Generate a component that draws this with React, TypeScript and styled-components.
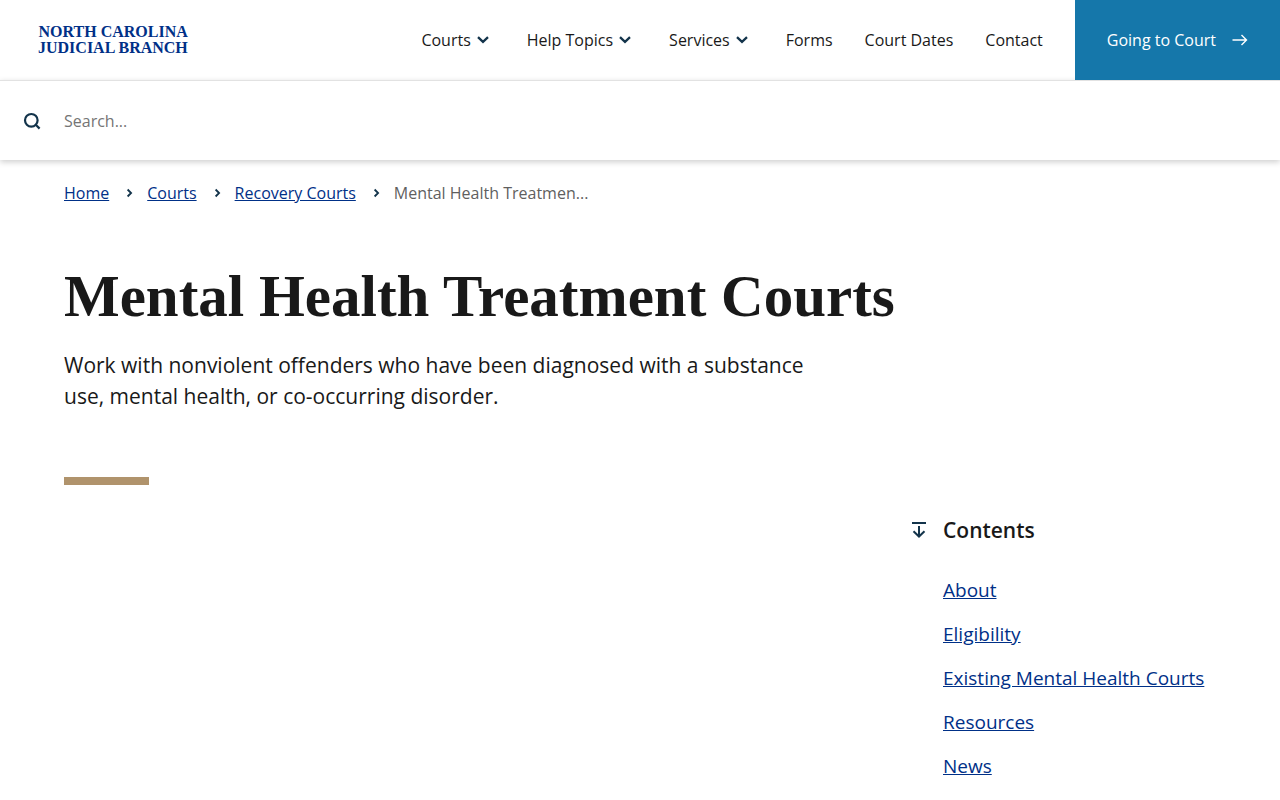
import React from "react";
import styled, { createGlobalStyle } from "styled-components";

const navy = "#003087";
const ink = "#191919";
const iconInk = "#13344b";

const GlobalStyle = createGlobalStyle`
  *, *::before, *::after { box-sizing: border-box; }
  body {
    margin: 0;
    background: #fff;
    color: ${ink};
    font-family: "Open Sans", "Noto Sans", sans-serif;
    font-size: 16px;
    line-height: 24px;
  }
  a { color: ${navy}; text-underline-offset: 1px; }
  ul, ol { list-style: none; margin: 0; padding: 0; }
`;

const Header = styled.header`
  display: flex;
  align-items: stretch;
  min-height: 80px;
`;

const Brand = styled.a`
  align-self: center;
  margin-left: 38px;
  margin-right: auto;
  font-family: "Liberation Serif", serif;
  font-size: 16px;
  line-height: 16px;
  font-weight: 700;
  text-decoration: none;
  text-transform: uppercase;
  text-align: right;
`;

const BrandLine = styled.span`
  display: block;
`;

const Nav = styled.nav`
  display: flex;
  align-items: center;
  gap: 32px;
  padding-right: 32px;
`;

const NavButton = styled.button`
  display: flex;
  align-items: center;
  gap: 6px;
  padding: 0 6px 0 0;
  border: 0;
  background: none;
  color: ${ink};
  font: inherit;
  cursor: pointer;
`;

const NavLink = styled.a`
  color: ${ink};
  text-decoration: none;
`;

const CourtLink = styled.a`
  position: relative;
  z-index: 1;
  display: flex;
  align-items: center;
  gap: 16px;
  padding: 0 32px;
  background: #1577aa;
  color: #fff;
  font-weight: 500;
  text-decoration: none;
`;

const SearchBar = styled.form`
  display: flex;
  align-items: center;
  gap: 22px;
  min-height: 80px;
  padding: 0 24px 0 22px;
  border-top: 1px solid #e2e2e2;
  background: #fff;
  box-shadow: 0 2px 6px rgba(0, 0, 0, 0.2);
`;

const SearchButton = styled.button`
  display: flex;
  padding: 0;
  border: 0;
  background: none;
  color: ${iconInk};
  cursor: pointer;
`;

const SearchInput = styled.input`
  flex: 1;
  min-width: 0;
  padding: 0;
  border: 0;
  outline: 0;
  background: none;
  color: ${ink};
  font: inherit;
  &::placeholder { color: #757575; opacity: 1; }
`;

const Page = styled.div`
  padding: 21px 64px 0;
`;

const Crumbs = styled.ol`
  display: flex;
  flex-wrap: wrap;
`;

const Crumb = styled.li`
  display: flex;
  align-items: center;
  color: #5f5f5f;
  svg { margin: 0 14px 0 16px; color: ${iconInk}; }
`;

const Title = styled.h1`
  margin: 55px 0 0;
  font-family: "Liberation Serif", serif;
  font-size: 59px;
  line-height: 72px;
  font-weight: 700;
`;

const Intro = styled.p`
  max-width: 760px;
  margin: 18px 0 0;
  font-size: 21px;
  line-height: 31px;
`;

const Accent = styled.hr`
  width: 85px;
  height: 8px;
  margin: 65px 0 0;
  border: 0;
  background: #b0936c;
`;

const Contents = styled.nav`
  width: 305px;
  margin: 29px 0 0 auto;
`;

const ContentsHead = styled.h2`
  display: flex;
  align-items: center;
  gap: 16px;
  margin: 0;
  font-size: 21px;
  line-height: 32px;
  font-weight: 600;
  svg { color: ${iconInk}; }
`;

const ContentsList = styled.ul`
  display: grid;
  gap: 16px;
  padding: 30px 0 20px 32px;
  font-size: 19px;
  line-height: 28px;
`;

const ChevronDown = () => (
  <svg width="12" height="8" viewBox="0 0 12 8" fill="none" stroke={iconInk} strokeWidth="2.3" aria-hidden="true">
    <path d="M1 1.2 6 5.9 11 1.2" />
  </svg>
);

const ChevronRight = () => (
  <svg width="8" height="10" viewBox="0 0 8 10" fill="none" stroke="currentColor" strokeWidth="1.8" aria-hidden="true">
    <path d="M2.6 1.5 6.1 5 2.6 8.5" />
  </svg>
);

const menus = ["Courts", "Help Topics", "Services"];
const pages = ["Forms", "Court Dates", "Contact"];
const trail = ["Home", "Courts", "Recovery Courts"];
const sections = ["About", "Eligibility", "Existing Mental Health Courts", "Resources", "News"];

export default function App() {
  return (
    <>
      <GlobalStyle />
      <Header>
        <Brand href="#">
          <BrandLine>North Carolina</BrandLine>
          <BrandLine>Judicial Branch</BrandLine>
        </Brand>
        <Nav aria-label="Main">
          {menus.map((label) => (
            <NavButton key={label} type="button" aria-haspopup="true">
              {label}
              <ChevronDown />
            </NavButton>
          ))}
          {pages.map((label) => (
            <NavLink key={label} href="#">{label}</NavLink>
          ))}
        </Nav>
        <CourtLink href="#">
          Going to Court
          <svg width="16" height="12" viewBox="0 0 16 12" fill="none" stroke="currentColor" strokeWidth="1.4" aria-hidden="true">
            <path d="M0.5 6H14.5M9.5 1 14.5 6 9.5 11" />
          </svg>
        </CourtLink>
      </Header>
      <SearchBar role="search" onSubmit={(e) => e.preventDefault()}>
        <SearchButton type="submit" aria-label="Search">
          <svg width="20" height="20" viewBox="0 0 20 20" fill="none" stroke="currentColor" strokeWidth="2.2" aria-hidden="true">
            <circle cx="9.3" cy="9.3" r="6.3" />
            <path d="M13.8 13.8 17.6 17.6" />
          </svg>
        </SearchButton>
        <SearchInput type="search" aria-label="Search the site" placeholder="Search..." />
      </SearchBar>
      <Page>
        <nav aria-label="Breadcrumb">
          <Crumbs>
            {trail.map((label) => (
              <Crumb key={label}>
                <a href="#">{label}</a>
                <ChevronRight />
              </Crumb>
            ))}
            <Crumb aria-current="page">Mental Health Treatmen...</Crumb>
          </Crumbs>
        </nav>
        <main>
          <Title>Mental Health Treatment Courts</Title>
          <Intro>
            Work with nonviolent offenders who have been diagnosed with a substance use, mental
            health, or co-occurring disorder.
          </Intro>
          <Accent />
          <Contents aria-labelledby="contents-title">
            <ContentsHead id="contents-title">
              <svg width="16" height="18" viewBox="0 0 16 18" fill="none" stroke="currentColor" strokeWidth="2" aria-hidden="true">
                <path d="M1 2H15M8 5V15.5M2.5 10.2 8 15.5 13.5 10.2" />
              </svg>
              Contents
            </ContentsHead>
            <ContentsList>
              {sections.map((label) => (
                <li key={label}>
                  <a href="#">{label}</a>
                </li>
              ))}
            </ContentsList>
          </Contents>
        </main>
      </Page>
    </>
  );
}
